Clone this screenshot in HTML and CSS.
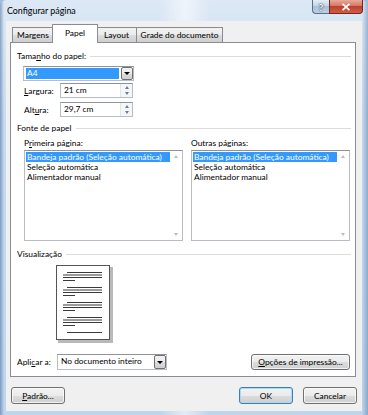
FILE: index.html
```html
<!DOCTYPE html>
<html lang="pt">
<head>
  <meta charset="UTF-8" />
  <title>Configurar página</title>
  <link rel="stylesheet" href="styles.css">
</head>
<body>
  <div class="window">
    <div class="titlebar">
      <span class="title">Configurar página</span>
      <div class="caption-buttons">
        <span class="cap-help">?</span>
        <span class="cap-close">
          <svg width="10" height="8" viewBox="0 0 10 8"><path d="M1.5 0.8 L8.5 7.2 M8.5 0.8 L1.5 7.2" stroke="#fff" stroke-width="1.8" fill="none"/></svg>
        </span>
      </div>
    </div>

    <div class="client">
      <div class="tabs">
        <div class="tab tab-margens">Margens</div>
        <div class="tab tab-papel active">Papel</div>
        <div class="tab tab-layout">Layout</div>
        <div class="tab tab-grade">Grade do documento</div>
      </div>

      <div class="panel">
        <div class="group-title"><span>Tama<u>n</u>ho do papel:</span></div>

        <div class="combo combo-size">
          <span class="combo-value"><span class="selected">A4</span></span>
          <span class="drop-btn"><i></i></span>
        </div>

        <div class="field-row">
          <label><u>L</u>argura:</label>
          <div class="spin">
            <span class="spin-value">21 cm</span>
            <span class="spin-btns"><i class="up"></i><i class="down"></i></span>
          </div>
        </div>
        <div class="field-row second">
          <label>Alt<u>u</u>ra:</label>
          <div class="spin">
            <span class="spin-value">29,7 cm</span>
            <span class="spin-btns"><i class="up"></i><i class="down"></i></span>
          </div>
        </div>

        <div class="group-title gap-small"><span>Fonte de papel</span></div>

        <div class="lists">
          <div class="list-col">
            <div class="list-label">P<u>r</u>imeira página:</div>
            <div class="listbox">
              <div class="items">
                <div class="item selected">Bandeja padrão (Seleção automática)</div>
                <div class="item">Seleção automática</div>
                <div class="item">Alimentador manual</div>
              </div>
              <div class="scrollbar"><i class="up"></i><i class="down"></i></div>
            </div>
          </div>
          <div class="list-col">
            <div class="list-label">Outras páginas:</div>
            <div class="listbox">
              <div class="items">
                <div class="item selected">Bandeja padrão (Seleção automática)</div>
                <div class="item">Seleção automática</div>
                <div class="item">Alimentador manual</div>
              </div>
              <div class="scrollbar"><i class="up"></i><i class="down"></i></div>
            </div>
          </div>
        </div>

        <div class="group-title gap-large"><span>Visualização</span></div>

        <div class="preview">
          <svg width="57" height="78" viewBox="0 0 57 78">
            <rect x="2" y="2" width="55" height="76" fill="#b9b9b9"/>
            <rect x="0.5" y="0.5" width="53" height="74" fill="#fff" stroke="#555"/>
            <g stroke="#3a3a3a" stroke-width="1">
              <path d="M11 7.5H46 M7 10H46 M7 12.5H46 M7 15.5H19"/>
              <path d="M11 22.5H46 M7 25H46 M7 27.5H46 M7 30.5H19"/>
              <path d="M11 37.5H46 M7 40H46 M7 42.5H46 M7 45.5H19"/>
              <path d="M11 52.5H46 M7 55H46 M7 57.5H46 M7 60.5H19"/>
              <path d="M11 67.5H46"/>
            </g>
          </svg>
        </div>

        <div class="apply-row">
          <label>Apli<u>c</u>ar a:</label>
          <div class="combo combo-apply">
            <span class="combo-value">No documento inteiro</span>
            <span class="drop-btn"><i></i></span>
          </div>
          <button class="btn btn-options"><u>O</u>pções de impressão...</button>
        </div>
      </div>

      <div class="footer">
        <button class="btn"><u>P</u>adrão...</button>
        <div class="footer-right">
          <button class="btn default">OK</button>
          <button class="btn">Cancelar</button>
        </div>
      </div>
    </div>
  </div>
</body>
</html>
```

FILE: styles.css
```css
body {
  margin: 0;
  width: 368px;
  height: 415px;
  overflow: hidden;
  font-family: Lato, "Noto Sans", sans-serif;
  font-size: 8.4px;
  color: #000;
  background: #9fbfe0;
}

u {
  text-decoration: underline;
  text-underline-offset: 1px;
}

.window {
  width: 368px;
  height: 415px;
  box-sizing: border-box;
  padding: 0 6px 4px 6px;
  border-radius: 6px 6px 0 0;
  background:
    linear-gradient(to right, rgba(40, 80, 140, 0.45) 0, rgba(40, 80, 140, 0) 4px, rgba(40, 80, 140, 0) 362px, rgba(40, 80, 140, 0.35) 368px),
    linear-gradient(to right, rgba(255, 255, 255, 0) 160px, rgba(255, 255, 255, 0.55) 185px, rgba(255, 255, 255, 0) 210px),
    linear-gradient(#dce8f5, #c7dbef 30%, #bed5ec);
  display: flex;
  flex-direction: column;
}

.titlebar {
  height: 21px;
  display: flex;
  justify-content: space-between;
  align-items: flex-start;
}

.title {
  font-size: 8.9px;
  line-height: 21px;
  padding-left: 1px;
  color: #000;
}

.caption-buttons {
  display: flex;
  margin-right: -1px;
}

.cap-help,
.cap-close {
  height: 13px;
  display: flex;
  align-items: center;
  justify-content: center;
  border: 1px solid #5b6f8a;
  border-top: none;
}

.cap-help {
  width: 16px;
  border-radius: 0 0 0 4px;
  border-right: none;
  background: linear-gradient(#e4edf6, #c2d3e6 50%, #aabfd8 50%, #bccfe3);
  color: #fff;
  font-weight: bold;
  font-size: 10px;
  text-shadow: 0 0 2px #233a5a, 0 0 1px #233a5a;
}

.cap-close {
  width: 32px;
  border-radius: 0 0 4px 0;
  border-color: #6d2a22;
  background: linear-gradient(#e9a99c, #d4705f 50%, #c0402f 50%, #d25c45);
}

.client {
  flex: 1;
  background: #f0f0f0;
  padding: 0 6px 0 4px;
  display: flex;
  flex-direction: column;
}

/* Tabs */
.tabs {
  height: 21px;
  display: flex;
  align-items: flex-end;
  padding-left: 2px;
}

.tab {
  height: 15px;
  line-height: 14px;
  box-sizing: border-box;
  border: 1px solid #898c95;
  border-bottom: none;
  margin-left: -1px;
  background: linear-gradient(#f2f2f2, #ebebeb 50%, #dddddd 50%, #cfcfcf);
  white-space: nowrap;
  text-align: center;
}

.tab-margens { width: 42px; margin-left: 0; }
.tab-papel { width: 46px; }
.tab-layout { width: 41px; }
.tab-grade { width: 87px; }

.tab.active {
  height: 19px;
  line-height: 17px;
  margin: 0 -1px -1px -2px;
  background: #fff;
  position: relative;
  z-index: 1;
}

/* Panel */
.panel {
  height: 335px;
  box-sizing: border-box;
  background: #fff;
  border: 1px solid #898c95;
  padding: 0 4px 0 6px;
}

.group-title {
  display: flex;
  align-items: center;
  height: 12px;
  margin-top: 7px;
  line-height: 12px;
}

.group-title::after {
  content: "";
  flex: 1;
  height: 1px;
  margin-left: 4px;
  background: #dcdcdc;
}

.group-title.gap-small {
  margin-top: 5px;
}

.group-title.gap-large {
  margin-top: 7px;
}

/* Combo boxes */
.combo {
  height: 15px;
  box-sizing: border-box;
  border: 1px solid #b8bcc4;
  border-top-color: #8f9399;
  display: flex;
  align-items: stretch;
  background: #fff;
}

.combo-size {
  width: 111px;
  margin: 4px 0 0 6px;
}

.combo-apply {
  width: 110px;
  height: 16px;
}

.combo-value {
  flex: 1;
  padding: 1px 1px 1px 2px;
  display: flex;
  line-height: 11px;
  white-space: nowrap;
  overflow: hidden;
}

.combo-apply .combo-value {
  line-height: 13px;
  padding: 0 0 0 3px;
}

.combo-value .selected {
  flex: 1;
  background: #3399ff;
  color: #fff;
  padding-left: 1px;
}

.drop-btn {
  width: 12px;
  flex: none;
  margin: 0 0 0 1px;
  box-sizing: border-box;
  border: 1px solid #707070;
  border-radius: 2px;
  background: linear-gradient(#f2f2f2, #ebebeb 50%, #dddddd 50%, #cfcfcf);
  display: flex;
  align-items: center;
  justify-content: center;
}

.drop-btn i {
  width: 0;
  height: 0;
  border-left: 3px solid transparent;
  border-right: 3px solid transparent;
  border-top: 3px solid #000;
}

/* Spin fields */
.field-row {
  display: flex;
  align-items: center;
  margin: 2px 0 0 7px;
}

.field-row.second {
  margin-top: 4px;
}

.field-row label {
  width: 36px;
}

.spin {
  width: 73px;
  height: 15px;
  box-sizing: border-box;
  border: 1px solid #b8bcc4;
  border-top-color: #8f9399;
  display: flex;
}

.spin-value {
  flex: 1;
  padding-left: 3px;
  line-height: 13px;
}

.spin-btns {
  width: 11px;
  display: flex;
  flex-direction: column;
  background: #f4f6f8;
  border-left: 1px solid #e1e4e8;
}

.spin-btns i {
  flex: 1;
  display: flex;
  align-items: center;
  justify-content: center;
}

.spin-btns i::before {
  content: "";
  border-left: 2.5px solid transparent;
  border-right: 2.5px solid transparent;
}

.spin-btns .up::before {
  border-bottom: 3px solid #6b7f9c;
}

.spin-btns .down::before {
  border-top: 3px solid #6b7f9c;
}

/* Listboxes */
.lists {
  display: grid;
  grid-template-columns: minmax(0, 1fr) minmax(0, 1fr);
  gap: 8px;
  margin: 3px 1px 0 7px;
}

.list-label {
  height: 12px;
  line-height: 12px;
}

.listbox {
  height: 91px;
  margin-top: 1px;
  box-sizing: border-box;
  border: 1px solid #b8bcc4;
  border-top-color: #8f9399;
  display: flex;
}

.items {
  flex: 1;
  padding: 1px 0 0 1px;
  min-width: 0;
  overflow: hidden;
}

.item {
  height: 10px;
  line-height: 10px;
  padding-left: 1px;
  white-space: nowrap;
}

.item.selected {
  background: #3399ff;
  color: #fff;
}

.scrollbar {
  width: 12px;
  flex: none;
  display: flex;
  flex-direction: column;
  justify-content: space-between;
  align-items: center;
  padding: 4px 0;
}

.scrollbar i {
  width: 0;
  height: 0;
  border-left: 2.5px solid transparent;
  border-right: 2.5px solid transparent;
}

.scrollbar .up {
  border-bottom: 3px solid #bdbdbd;
}

.scrollbar .down {
  border-top: 3px solid #bdbdbd;
}

/* Preview */
.preview {
  margin: 5px 0 0 39px;
  height: 75px;
}

.preview svg {
  display: block;
}

.apply-row {
  display: flex;
  align-items: center;
  margin: 14px 1px 0 0;
}

.apply-row label {
  width: 40px;
}

/* Buttons */
.btn {
  font-family: inherit;
  font-size: 8.4px;
  color: #000;
  height: 17px;
  padding: 0;
  box-sizing: border-box;
  border: 1px solid #707070;
  border-radius: 3px;
  background: linear-gradient(#f2f2f2, #ebebeb 50%, #dddddd 50%, #cfcfcf);
  box-shadow: inset 0 0 0 1px rgba(255, 255, 255, 0.7);
  line-height: 14px;
  white-space: nowrap;
}

.btn-options {
  width: 99px;
  height: 16px;
  margin-left: auto;
}

.footer {
  display: flex;
  justify-content: space-between;
  margin-top: 10px;
  padding-left: 1px;
}

.footer .btn {
  width: 54px;
}

.footer-right {
  display: flex;
  gap: 10px;
  margin-right: -1px;
}

.btn.default {
  border-color: #3c7fb1;
  box-shadow: inset 0 0 0 1px #a6daf5;
}
```
